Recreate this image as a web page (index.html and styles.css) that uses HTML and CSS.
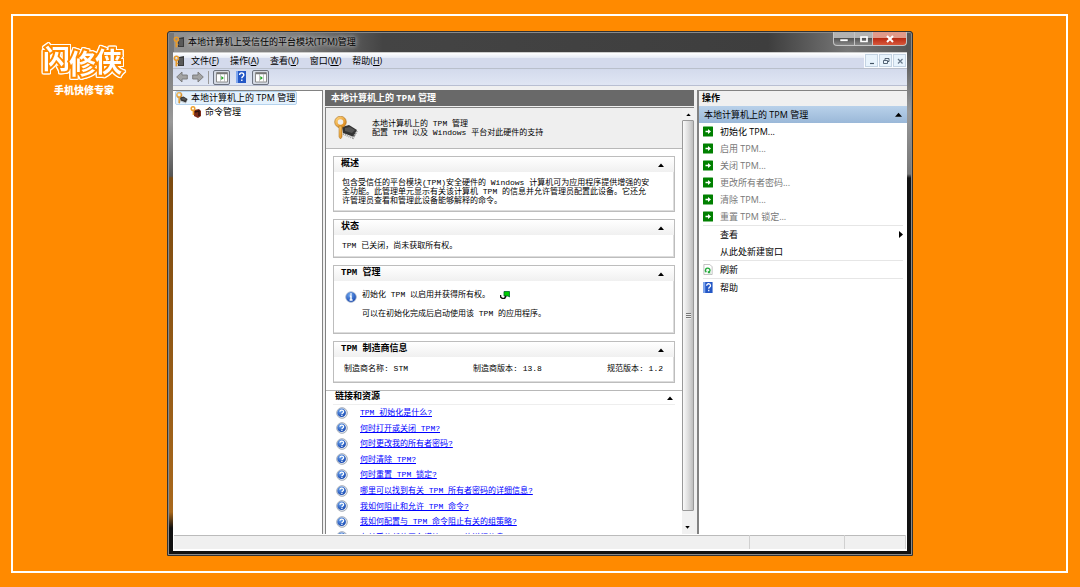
FILE: index.html
```html
<!DOCTYPE html>
<html lang="zh-CN">
<head>
<meta charset="utf-8">
<title>本地计算机上受信任的平台模块(TPM)管理</title>
<link rel="stylesheet" href="styles.css">
</head>
<body>
<svg class="defs" aria-hidden="true">
  <defs>
    <linearGradient id="gold" x1="0" y1="0" x2="1" y2="1"><stop offset="0" stop-color="#ffd277"/><stop offset="1" stop-color="#d9861a"/></linearGradient>
    <radialGradient id="blue" cx=".4" cy=".3" r=".8"><stop offset="0" stop-color="#6fa8f0"/><stop offset="1" stop-color="#0a3aa8"/></radialGradient>
  </defs>
  <symbol id="key-rack" viewBox="0 0 12 12">
    <path d="M6 2l5-1v10H5V6z" fill="#3a3a3a"/><path d="M7 3v7M9 3v7" stroke="#8b8b8b" stroke-width=".8"/>
    <circle cx="3.4" cy="3.2" r="2" fill="none" stroke="#e69a2b" stroke-width="1.6"/><path d="M3.4 5v6.4" stroke="#e69a2b" stroke-width="1.8"/><path d="M4 8.5h1.3" stroke="#e69a2b"/>
  </symbol>
  <symbol id="key-chip" viewBox="0 0 24 24">
    <path d="M8 11l7-2 8 5-3 7-11-4z" fill="#333"/><path d="M9 18l10 4 4-7" fill="none" stroke="#999" stroke-width="2" stroke-dasharray="1 1"/><path d="M11 12l5-1 5 3-3 3-7-2z" fill="#555"/>
    <circle cx="6.5" cy="6" r="4.3" fill="none" stroke="url(#gold)" stroke-width="3"/><circle cx="6.5" cy="6" r="5.8" fill="none" stroke="#a66a16" stroke-width=".6"/>
    <path d="M5 10h3v11l-1.500 2L5 21z" fill="url(#gold)" stroke="#a66a16" stroke-width=".5"/>
  </symbol>
  <symbol id="key-box" viewBox="0 0 12 12">
    <path d="M4 4l5-1 2 2v5l-3 2-4-2z" fill="#7c2a18"/><path d="M5 6l4-1v5" fill="none" stroke="#2b1310" stroke-width="1.400"/>
    <circle cx="3" cy="2.600" r="1.800" fill="none" stroke="#eda02f" stroke-width="1.500"/><path d="M3.400 4v5" stroke="#eda02f" stroke-width="1.500"/>
  </symbol>
  <symbol id="arrow" viewBox="0 0 12 12"><path d="M.7 6L6 1v3h5.300v4H6v3z" fill="#a3a3a3" stroke="#777" stroke-width=".9"/></symbol>
  <symbol id="panel" viewBox="0 0 12 12"><path d="M.5 1.500h11v9.500H.5z" fill="#fff" stroke="#8c8c8c"/><path d="M1 2.500h10" stroke="#777" stroke-width="1.500"/><path d="M4.500 3v8M8.500 3v8" stroke="#b5b5b5" stroke-width=".8"/><path d="M5.300 5l2.600 2-2.600 2z" fill="#22a322"/></symbol>
  <symbol id="book" viewBox="0 0 10 12"><path d="M0 0h10v12H0z" fill="#2457c5"/><path d="M0 0h2v12H0z" fill="#7ea6ee"/><path d="M3.600 4c0-3 4.200-2.600 4.200 0 0 1.500-2 1.600-2 3.300M5.800 8.500V10" fill="none" stroke="#fff" stroke-width="1.400"/></symbol>
  <symbol id="go" viewBox="0 0 10 10"><rect width="10" height="10" rx=".5" fill="#008000"/><path d="M2.500 4.200H5V2.400L8 5 5 7.600V5.800H2.500z" fill="#fff"/></symbol>
  <symbol id="reload" viewBox="0 0 10 12"><path d="M.5.500h6.500l2.500 2.500v8.500h-9z" fill="#fff" stroke="#aaa" stroke-width=".8"/><path d="M3.200 9c-2.400-2.600 0-5.400 2.600-4.200 2 1 1.600 3 .4 4" fill="none" stroke="#22a93a" stroke-width="1.500"/><path d="M4.800 7v3h3.400z" fill="#22a93a"/></symbol>
  <symbol id="ask" viewBox="0 0 12 12"><circle cx="6" cy="6" r="5.300" fill="#e8edf4" stroke="#9aa3b0" stroke-width=".9"/><circle cx="5.600" cy="5.700" r="4.300" fill="url(#blue)"/><path d="M4 4.800c0-2.400 3.600-2.200 3.600 0 0 1.200-1.700 1.300-1.700 2.400M5.900 8v1" fill="none" stroke="#fff" stroke-width="1.200"/></symbol>
  <symbol id="info" viewBox="0 0 12 12"><circle cx="6" cy="6" r="5.300" fill="url(#blue)" stroke="#a9b6cc" stroke-width=".8"/><path d="M6 2.300v1.500M4.800 5H6v4M4.600 9h3" fill="none" stroke="#fff" stroke-width="1.500"/></symbol>
  <symbol id="up" viewBox="0 0 6 4"><path d="M0 4l3-3.500L6 4z" fill="#000"/></symbol>
</svg>

<div class="frame">
  <header class="brand">
    <svg class="logo" viewBox="0 0 92 50" role="img" aria-label="闪修侠"><text x="3 29 55" y="30 35 33">闪修侠</text></svg>
    <p class="slogan">手机快修专家</p>
  </header>

  <main class="window">
    <div class="titlebar">
      <svg class="i12"><use href="#key-rack"/></svg>
      <h1>本地计算机上受信任的平台模块(TPM)管理</h1>
      <div class="caption">
        <button class="cap min" aria-label="最小化"><svg viewBox="0 0 10 10"><path d="M1 5h8v2.500H1z" fill="#fff" stroke="#444" stroke-width=".5"/></svg></button>
        <button class="cap max" aria-label="最大化"><svg viewBox="0 0 10 10"><path d="M2 3h6v4.500H2z" fill="none" stroke="#fff" stroke-width="1.700"/></svg></button>
        <button class="cap close" aria-label="关闭"><svg viewBox="0 0 10 10"><path d="M2 2l6 6M8 2L2 8" stroke="#fff" stroke-width="2"/></svg></button>
      </div>
    </div>

    <div class="client">
      <nav class="menubar">
        <svg class="i12"><use href="#key-rack"/></svg>
        <button>文件(<u>F</u>)</button><button>操作(<u>A</u>)</button><button>查看(<u>V</u>)</button><button>窗口(<u>W</u>)</button><button>帮助(<u>H</u>)</button>
        <div class="mdi">
          <button aria-label="最小化子窗口"><svg viewBox="0 0 10 10"><path d="M3 7.500h4" stroke="#456" stroke-width="1.200"/></svg></button>
          <button aria-label="还原子窗口"><svg viewBox="0 0 10 10"><path d="M2.500 4.500h4v3h-4zM4 4V2.500h4v3H7" fill="none" stroke="#456" stroke-width=".9"/></svg></button>
          <button aria-label="关闭子窗口"><svg viewBox="0 0 10 10"><path d="M3 3l4.500 4.500M7.500 3L3 7.500" stroke="#678" stroke-width="1.200"/></svg></button>
        </div>
      </nav>
      <div class="toolbar">
        <button aria-label="后退"><svg class="i12"><use href="#arrow"/></svg></button>
        <button aria-label="前进"><svg class="i12 flip"><use href="#arrow"/></svg></button>
        <span class="bar"></span>
        <button class="pressed" aria-label="控制台树"><svg class="i12"><use href="#panel"/></svg></button>
        <button class="wide" aria-label="帮助"><svg class="book"><use href="#book"/></svg></button>
        <button class="pressed" aria-label="操作窗格"><svg class="i12"><use href="#panel"/></svg></button>
      </div>

      <div class="panes">
        <aside class="tree">
          <a href="#tpm" class="node selected"><svg class="i12"><use href="#key-chip"/></svg><span>本地计算机上的 TPM 管理</span></a>
          <a href="#cmd" class="node child"><svg class="i12"><use href="#key-box"/></svg><span>命令管理</span></a>
        </aside>

        <section class="center" id="tpm">
          <h2>本地计算机上的 TPM 管理</h2>
          <div class="view">
            <div class="content">
              <div class="intro">
                <svg class="i24"><use href="#key-chip"/></svg>
                <p>本地计算机上的 TPM 管理<br>配置 TPM 以及 Windows 平台对此硬件的支持</p>
              </div>
              <div class="cards">
                <section class="card overview">
                  <h3>概述<svg class="up"><use href="#up"/></svg></h3>
                  <p>包含受信任的平台模块(TPM)安全硬件的 Windows 计算机可为应用程序提供增强的安<br>全功能。此管理单元显示有关该计算机 TPM 的信息并允许管理员配置此设备。它还允<br>许管理员查看和管理此设备能够解释的命令。</p>
                </section>
                <section class="card status">
                  <h3>状态<svg class="up"><use href="#up"/></svg></h3>
                  <p>TPM 已关闭，尚未获取所有权。</p>
                </section>
                <section class="card manage">
                  <h3>TPM 管理<svg class="up"><use href="#up"/></svg></h3>
                  <div class="note">
                    <svg class="i12"><use href="#info"/></svg>
                    <div>
                      <p>初始化 TPM 以启用并获得所有权。<svg class="jump" viewBox="0 0 10 8"><path d="M4 .5h5.500V6L8 5H4z" fill="#0c0" stroke="#063" stroke-width=".8"/><path d="M.5 4v2l2 1.500h2L6 5" fill="none" stroke="#111" stroke-width="1.500"/></svg></p>
                      <p>可以在初始化完成后启动使用该 TPM 的应用程序。</p>
                    </div>
                  </div>
                </section>
                <section class="card maker">
                  <h3>TPM 制造商信息<svg class="up"><use href="#up"/></svg></h3>
                  <div class="facts"><span>制造商名称: STM</span><span>制造商版本: 13.8</span><span>规范版本: 1.2</span></div>
                </section>
              </div>
              <section class="links">
                <h3>链接和资源<svg class="up"><use href="#up"/></svg></h3>
                <ul>
                  <li><svg class="i12"><use href="#ask"/></svg><a href="#l1">TPM 初始化是什么?</a></li>
                  <li><svg class="i12"><use href="#ask"/></svg><a href="#l2">何时打开或关闭 TPM?</a></li>
                  <li><svg class="i12"><use href="#ask"/></svg><a href="#l3">何时更改我的所有者密码?</a></li>
                  <li><svg class="i12"><use href="#ask"/></svg><a href="#l4">何时清除 TPM?</a></li>
                  <li><svg class="i12"><use href="#ask"/></svg><a href="#l5">何时重置 TPM 锁定?</a></li>
                  <li><svg class="i12"><use href="#ask"/></svg><a href="#l6">哪里可以找到有关 TPM 所有者密码的详细信息?</a></li>
                  <li><svg class="i12"><use href="#ask"/></svg><a href="#l7">我如何阻止和允许 TPM 命令?</a></li>
                  <li><svg class="i12"><use href="#ask"/></svg><a href="#l8">我如何配置与 TPM 命令阻止有关的组策略?</a></li>
                  <li><svg class="i12"><use href="#ask"/></svg><a href="#l9">有关受信任的平台模块 TPM 的详细信息</a></li>
                </ul>
              </section>
            </div>
            <div class="scroll">
              <button aria-label="向上滚动"><svg class="up small"><use href="#up"/></svg></button>
              <div class="thumb"><i></i></div>
              <button class="down" aria-label="向下滚动"><svg class="up small"><use href="#up"/></svg></button>
            </div>
          </div>
        </section>

        <aside class="actions">
          <h2>操作</h2>
          <h3>本地计算机上的 TPM 管理<svg class="up big"><use href="#up"/></svg></h3>
          <div class="list">
            <button><svg><use href="#go"/></svg>初始化 TPM...</button>
            <button disabled><svg><use href="#go"/></svg>启用 TPM...</button>
            <button disabled><svg><use href="#go"/></svg>关闭 TPM...</button>
            <button disabled><svg><use href="#go"/></svg>更改所有者密码...</button>
            <button disabled><svg><use href="#go"/></svg>清除 TPM...</button>
            <button disabled><svg><use href="#go"/></svg>重置 TPM 锁定...</button>
            <hr>
            <button class="plain">查看<svg class="more" viewBox="0 0 4 7"><path d="M0 0l4 3.500L0 7z"/></svg></button>
            <button class="plain">从此处新建窗口</button>
            <hr>
            <button><svg><use href="#reload"/></svg>刷新</button>
            <hr>
            <button><svg><use href="#book"/></svg>帮助</button>
          </div>
        </aside>
      </div>
      <footer class="statusbar"><span></span><span></span><span></span></footer>
    </div>
  </main>
</div>
</body>
</html>
```

FILE: styles.css
```css
* { box-sizing: border-box; }

body {
  margin: 0;
  height: 100vh;
  padding: 14px 12px 14px 11px;
  background: #ff8a00;
  font: 9px/14px "Open Sans", "Noto Sans CJK SC", sans-serif;
  color: #000;
}

h1, h2, h3, p, ul { margin: 0; padding: 0; font-size: inherit; }
button { font: inherit; color: inherit; border: 0; padding: 0; background: none; }
svg { flex: none; display: block; }

.defs { position: absolute; width: 0; height: 0; }
.i12 { width: 12px; height: 12px; }
.i24 { width: 24px; height: 24px; }
.up { width: 6px; height: 4px; margin-left: auto; }
.up.small { width: 5px; height: 3px; margin: 0 auto; }
.up.big { width: 7px; height: 5px; }

.frame {
  height: 100%;
  border: 2px solid #fff;
  padding: 15px 0;
  display: grid;
  grid-template-columns: 154px minmax(0, 1fr) 153px;
}

/* Brand */
.brand { padding-left: 27px; color: #fff; }
.logo {
  width: 92px;
  height: 50px;
  margin-top: 8px;
  overflow: visible;
  filter: drop-shadow(1px 0 #fff) drop-shadow(-1px 0 #fff) drop-shadow(0 1px #fff) drop-shadow(0 -1px #fff);
}
.logo text {
  font: 700 27px "Noto Sans CJK SC", sans-serif;
  fill: #fff;
  stroke: #ff8a00;
  stroke-width: 4px;
  paint-order: stroke;
}
.slogan { width: 88px; font-size: 10px; line-height: 10px; font-weight: 900; text-align: center; margin-top: -4px; }

/* Window */
.window {
  min-height: 0;
  display: flex;
  flex-direction: column;
  padding: 0 5px 4px;
  border: 1px solid #333;
  border-radius: 3px 3px 1px 1px;
  background:
    linear-gradient(#777 0 20px, #999 90px, #555 144px, #7b4a10 146px, #a8681c 480px, #111 496px) left / 6px 100% no-repeat,
    linear-gradient(#555 0 20px, #999 80px, #777 142px, #111 146px) right / 6px 100% no-repeat,
    linear-gradient(90deg, #929292, #7c7c7c 130px, #444 215px, #3e3e3e 600px, #777 680px, #555) top / 100% 30px no-repeat,
    #111;
  box-shadow: inset 0 0 0 1px #8a8a8a;
}
.titlebar { flex: none; height: 20px; display: flex; align-items: center; gap: 3px; }
.titlebar h1 { font-weight: 400; white-space: nowrap; text-shadow: 0 0 4px #ccc, 0 0 6px #bbb; }
.caption { margin-left: auto; align-self: flex-start; display: flex; }
.cap {
  width: 22px;
  height: 14px;
  display: grid;
  place-items: center;
  border: 1px solid #c4c4c4;
  border-top: 0;
  background: linear-gradient(#b2b2b2 45%, #555 50%, #888);
}
.cap svg { width: 10px; height: 10px; }
.min { border-radius: 0 0 0 4px; }
.max { width: 18px; border-left: 0; }
.close { width: 34px; border-left: 0; border-radius: 0 0 4px 0; background: linear-gradient(#e09a8a 45%, #b92c14 50%, #d8583c); }

.client {
  flex: 1;
  min-height: 0;
  display: flex;
  flex-direction: column;
  background: #f0f0f0;
  border-top: 1px solid #ccc;
}
.menubar {
  flex: none;
  height: 16px;
  display: flex;
  align-items: center;
  gap: 11px;
  background: linear-gradient(#fff, #e8ecf6 30%, #d4daec 35%);
  border-bottom: 1px solid #b9bfcb;
}
.menubar > svg { margin-right: -5px; }
.menubar > button { white-space: nowrap; }
.mdi { margin-left: auto; height: 15px; display: flex; gap: 1px; padding: 1px; background: #fafcff; }
.mdi button { width: 13px; display: grid; place-items: center; background: #e8f3fc; border: 1px solid #c4d3e2; }
.mdi svg { width: 10px; height: 10px; }

.toolbar {
  flex: none;
  height: 17px;
  display: flex;
  align-items: center;
  gap: 4px;
  padding-left: 3px;
  background: linear-gradient(#d3daec, #e0e6f4);
  border-bottom: 1px solid #b9bfd2;
}
.flip { transform: scaleX(-1); }
.bar { width: 1px; height: 13px; background: #999; }
.pressed { width: 17px; height: 15px; display: grid; place-items: center; border: 1px solid #6c7280; border-radius: 2px; background: #d5dae4; }
.wide { width: 14px; display: grid; place-items: center; }
.book { width: 10px; height: 12px; }

.panes {
  flex: 1;
  min-height: 0;
  margin-top: 4px;
  display: grid;
  grid-template-columns: 150px minmax(0, 1fr) 210px;
  gap: 2px;
}

/* Console tree */
.tree { background: #fff; border: solid #828282; border-width: 1px 1px 0 0; }
.node { width: max-content; height: 14px; display: flex; align-items: center; gap: 3px; margin-left: 2px; padding: 0 2px 0 1px; color: inherit; text-decoration: none; }
.selected { border: 1px solid #b5d3ee; border-radius: 2px; padding: 0 1px 0 0; background: #e4f1fc; }
.child { margin-left: 16px; }

/* Centre pane */
.center { min-width: 0; min-height: 0; margin-right: 1px; display: flex; flex-direction: column; }
.center > h2 { flex: none; height: 16px; padding-left: 6px; line-height: 16px; color: #fff; background: #696969; }
.view { flex: 1; min-height: 0; margin-top: 1px; display: flex; background: #fff; border: solid #828282; border-width: 1px 0 0 1px; }
.content { flex: 1; min-width: 0; overflow: hidden; font: 8px/9px "Liberation Mono", "Noto Sans CJK SC", monospace; }
.intro { height: 41px; display: flex; align-items: center; gap: 14px; padding: 0 8px; background: #efefef; border-bottom: 1px solid #b8b8b8; }
.cards { display: flex; flex-direction: column; gap: 7px; padding: 7px; }
.card { border: 1px solid #bdbdbd; box-shadow: inset -1px -1px #ddd; padding-bottom: 1px; }
.card h3, .links h3 { height: 15px; display: flex; align-items: center; padding: 0 10px 0 7px; font-size: 9px; }
.card h3 { background: linear-gradient(#fff, #f0f0f0); }
.card > p { white-space: nowrap; padding: 6px 8px; }
.overview { height: 56px; }
.status { height: 39px; }
.manage { height: 69px; }
.note { display: flex; gap: 5px; padding: 8px 11px; }
.note .i12 { margin-top: 2px; }
.note p { display: flex; align-items: center; height: 19px; white-space: nowrap; }
.note p:first-child { height: 10px; margin-bottom: 5px; }
.jump { align-self: flex-end; width: 10px; height: 8px; margin-left: 10px; }
.maker { height: 42px; }
.facts { display: flex; justify-content: space-between; padding: 7px 11px 0 10px; }

.links { border-top: 1px solid #b8b8b8; }
.links h3 { height: 14px; margin: 0 7px; padding: 0 2px; border-bottom: 1px solid #eee; }
.links ul { list-style: none; height: 140px; display: grid; grid-auto-rows: 1fr; padding-left: 10px; }
.links li { display: flex; align-items: center; gap: 12px; white-space: nowrap; }
.links a { color: #00f; }

.scroll { flex: none; width: 12px; display: flex; flex-direction: column; background: #f1f1f1; }
.scroll button { height: 12px; display: grid; place-items: center; }
.down { transform: rotate(180deg); }
.scroll .down { margin-top: 11px; }
.thumb { flex: 1; display: grid; place-items: center; border: 1px solid #999; border-radius: 1px; background: linear-gradient(90deg, #fafafa, #d9d9d9 60%, #bdbdbd); }
.thumb i { width: 5px; height: 6px; background: repeating-linear-gradient(#777 0 1px, #eee 1px 2px); }

/* Actions pane */
.actions { background: #fff; border: solid #828282; border-width: 1px 0 0 2px; }
.actions h2 { height: 15px; padding-left: 3px; background: #f0f0f0; }
.actions h3 { height: 17px; display: flex; align-items: center; padding: 0 5px; font-weight: 400; background: linear-gradient(#b9d1ea, #9ab8d8); }
.list { display: flex; flex-direction: column; padding: 0 4px; }
.list button { height: 17px; display: flex; align-items: center; gap: 7px; text-align: left; }
.list button:disabled { color: #777; }
.list button > svg { width: 10px; height: 11px; }
.list .plain { padding-left: 17px; }
.list button > .more { width: 4px; height: 7px; margin-left: auto; }
.list hr { width: 100%; margin: 0; border: 0; border-top: 1px solid #e6e6e6; }

.statusbar {
  flex: none;
  height: 17px;
  display: grid;
  grid-template-columns: minmax(0, 1fr) 95px 61px;
  border: solid #fff;
  border-width: 1px 1px 2px;
  box-shadow: inset 0 1px #bbb;
}
.statusbar span { border-right: 1px solid #d0d0d0; }
```
